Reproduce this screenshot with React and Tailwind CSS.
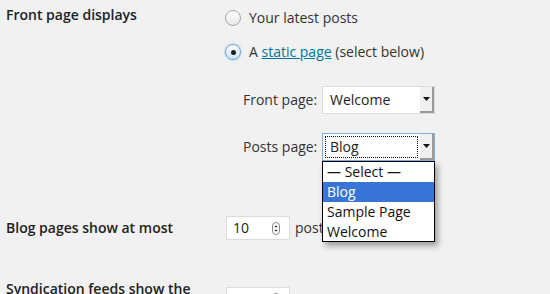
import React from "react";

const Radio = ({ checked }) => (
  <span
    className={
      "flex h-4 w-4 shrink-0 items-center justify-center rounded-full border " +
      (checked
        ? "border-[#7aa7d6] bg-gradient-to-b from-[#ffffff] to-[#cfe3f7] shadow-[0_0_2px_rgba(30,140,190,0.6)]"
        : "border-[#a8a8a8] bg-gradient-to-b from-[#ffffff] to-[#e8e8e8]")
    }
  >
    {checked && <span className="h-[5px] w-[5px] rounded-full bg-[#1e1e1e]" />}
  </span>
);

const SelectBox = ({ value, focused }) => (
  <div
    className={
      "flex h-[28px] w-[113px] items-stretch border bg-white " +
      (focused ? "border-[#7fb0e0]" : "border-[#dcdcdc]")
    }
  >
    <div className="flex flex-1 items-center p-[2px]">
      <div
        className={
          "flex h-full w-full items-center pl-[4px] text-[#222] " +
          (focused ? "border border-dotted border-[#111]" : "border border-transparent")
        }
      >
        {value}
      </div>
    </div>
    <div className="flex w-[14px] items-center justify-center border-r-2 border-b-2 border-[#9a9a9a] bg-[#f0f0f0]">
      <svg width="7" height="4" viewBox="0 0 7 4">
        <path d="M0 0h7L3.5 4z" fill="#111" />
      </svg>
    </div>
  </div>
);

const Spinner = () => (
  <svg width="8" height="13" viewBox="0 0 8 13">
    <rect x="0.5" y="0.5" width="7" height="12" rx="3.5" fill="#fff" stroke="#8a8a8a" />
    <path d="M2.3 5.3h3.4L4 3.3z" fill="#333" />
    <path d="M2.3 7.7h3.4L4 9.7z" fill="#333" />
  </svg>
);

const NumberInput = ({ value }) => (
  <div className="flex h-[24px] w-[64px] shrink-0 items-center justify-between border border-[#dcdcdc] bg-white pl-[6px] pr-[9px] text-[#222]">
    <span>{value}</span>
    <Spinner />
  </div>
);

export default function App() {
  return (
    <div
      className="h-[294px] w-[550px] overflow-hidden bg-[#f1f1f1] text-[14px] leading-[20px] text-[#333]"
      style={{ fontFamily: '"Open Sans", "Liberation Sans", sans-serif' }}
    >
      <div className="flex pt-[5px]">
        <div className="w-[225px] shrink-0 pl-[6px] font-semibold text-[#222]">Front page displays</div>
        <div className="flex flex-col pt-[3px]">
          <label className="flex items-center gap-[8px]">
            <Radio />
            <span>Your latest posts</span>
          </label>
          <label className="mt-[14px] flex items-center gap-[8px]">
            <Radio checked />
            <span>
              A{" "}
              <a className="text-[#0074a2] underline" href="#">
                static page
              </a>{" "}
              (select below)
            </span>
          </label>
          <div className="mt-[24px] flex flex-col gap-[19px] pl-[18px]">
            <div className="flex items-center">
              <span className="w-[79px]">Front page:</span>
              <SelectBox value="Welcome" />
            </div>
            <div className="relative flex items-center">
              <span className="w-[79px]">Posts page:</span>
              <SelectBox value="Blog" focused />
              <ul className="absolute top-[28px] left-[79px] z-10 w-[113px] border border-black bg-white text-[#111] shadow-[3px_4px_6px_rgba(0,0,0,0.35)]">
                <li className="h-[20px] pl-[4px]">— Select —</li>
                <li className="h-[20px] bg-[#3875d7] pl-[4px] text-white">Blog</li>
                <li className="h-[20px] pl-[4px]">Sample Page</li>
                <li className="h-[19px] pl-[4px]">Welcome</li>
              </ul>
            </div>
          </div>
        </div>
      </div>

      <div className="mt-[55px] flex items-center">
        <div className="w-[226px] shrink-0 pl-[6px] font-semibold text-[#222]">Blog pages show at most</div>
        <NumberInput value="10" />
        <span className="ml-[5px]">posts</span>
      </div>

      <div className="mt-[39px] flex items-start">
        <div className="w-[226px] shrink-0 pl-[6px] font-semibold text-[#222]">
          Syndication feeds show the most recent
        </div>
        <div className="mt-[8px] flex items-center">
          <NumberInput value="10" />
          <span className="ml-[5px]">items</span>
        </div>
      </div>
    </div>
  );
}
